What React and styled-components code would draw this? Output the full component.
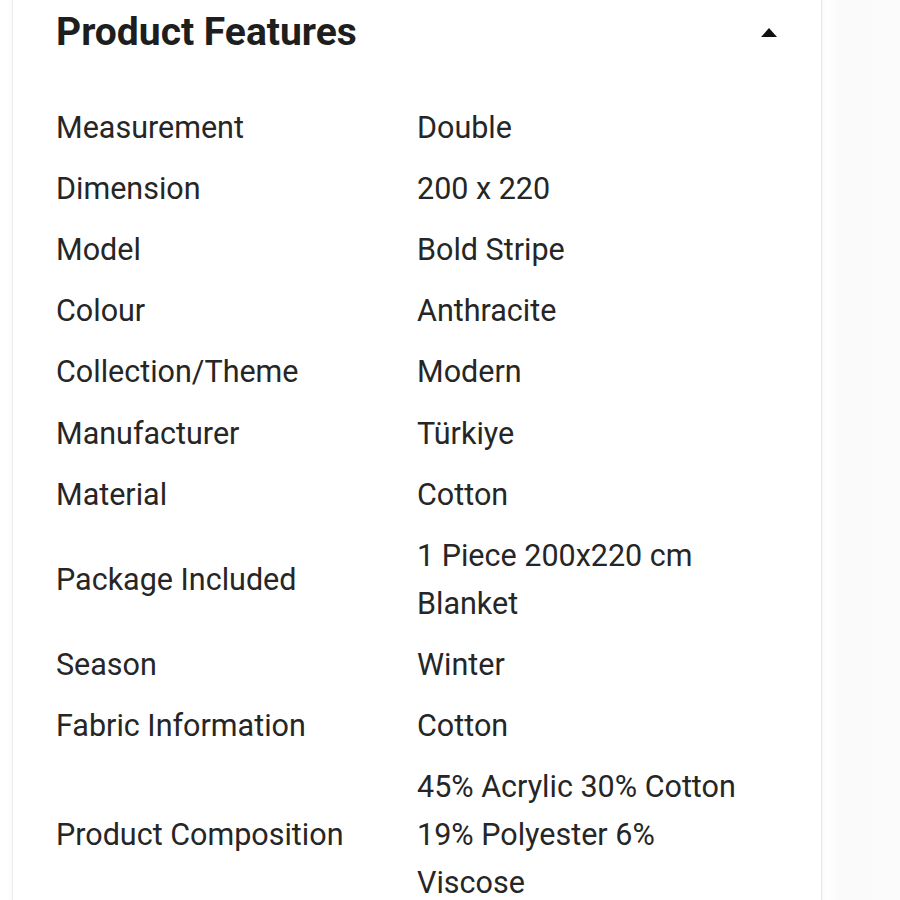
import { Fragment } from 'react'
import styled, { createGlobalStyle } from 'styled-components'

const GlobalStyle = createGlobalStyle`
	html, body {
		margin: 0;
		padding: 0;
		background: #fff;
		overflow: hidden;
	}
	body {
		font-family: Roboto, "Liberation Sans", sans-serif;
		color: #222;
	}
`

const Page = styled.div`
	display: flex;
	height: 900px;
	background: linear-gradient(to right, #fff 0, #fff 826px, #fafafa 840px, #fbfbfb 100%);
	padding-left: 12px;
	box-sizing: border-box;
`

const Card = styled.section`
	width: 810px;
	height: 940px;
	margin-top: -20px;
	background: #fff;
	border-left: 1px solid #ececec;
	border-right: 1px solid #e6e6e6;
	box-shadow: 0 0 6px rgba(0, 0, 0, 0.04);
	padding: 20px 44px 0 43px;
	box-sizing: border-box;
	overflow: hidden;
`

const Header = styled.div`
	display: flex;
	align-items: center;
	justify-content: space-between;
	height: 64px;
`

const Title = styled.h2`
	margin: 0;
	font-size: 39px;
	font-weight: 700;
	color: #1e1e1e;
`

const Caret = styled.span`
	width: 0;
	height: 0;
	border-left: 8.5px solid transparent;
	border-right: 8.5px solid transparent;
	border-bottom: 9px solid #111;
`

const Table = styled.div`
	display: grid;
	grid-template-columns: 361px 332px;
	padding-top: 33px;
`

const Cell = styled.div`
	display: flex;
	align-items: center;
	padding: 6.6px 0;
	font-size: 30.5px;
	line-height: 48px;
	color: #262626;
`

const features = [
	['Measurement', 'Double'],
	['Dimension', '200 x 220'],
	['Model', 'Bold Stripe'],
	['Colour', 'Anthracite'],
	['Collection/Theme', 'Modern'],
	['Manufacturer', 'Türkiye'],
	['Material', 'Cotton'],
	['Package Included', '1 Piece 200x220 cm Blanket'],
	['Season', 'Winter'],
	['Fabric Information', 'Cotton'],
	['Product Composition', '45% Acrylic 30% Cotton 19% Polyester 6% Viscose'],
]

export default function App() {
	return (
		<>
			<GlobalStyle />
			<Page>
				<Card>
					<Header>
						<Title>Product Features</Title>
						<Caret />
					</Header>
					<Table>
						{features.map(([label, value]) => (
							<Fragment key={label}>
								<Cell>{label}</Cell>
								<Cell>{value}</Cell>
							</Fragment>
						))}
					</Table>
				</Card>
			</Page>
		</>
	)
}
